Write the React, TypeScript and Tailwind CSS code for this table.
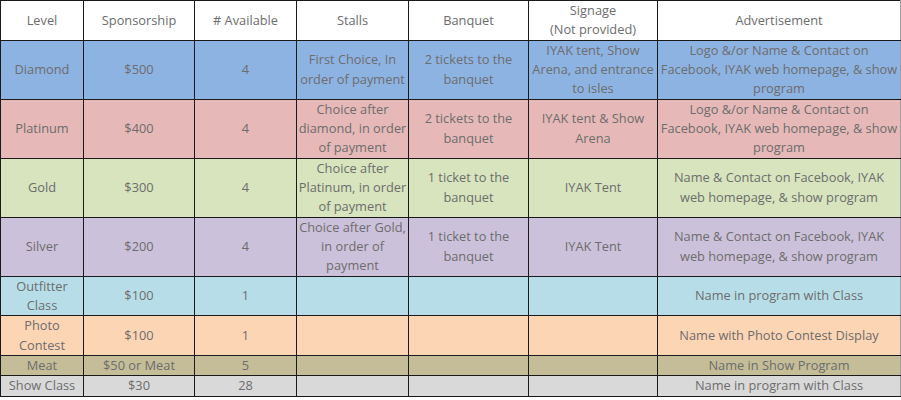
import * as React from "react"

interface Row {
  level: string;
  sponsorship: string;
  available: string;
  stalls: string;
  banquet: string;
  signage: string;
  advertisement: string[];
  bg: string;
}

const rows: Row[] = [
  {
    level: "Diamond",
    sponsorship: "$500",
    available: "4",
    stalls: "First Choice, In order of payment",
    banquet: "2 tickets to the banquet",
    signage: "IYAK tent, Show Arena, and entrance to isles",
    advertisement: ["Logo &/or Name & Contact on Facebook, IYAK web homepage, & show program"],
    bg: "bg-[#8db3e2]",
  },
  {
    level: "Platinum",
    sponsorship: "$400",
    available: "4",
    stalls: "Choice after diamond, in order of payment",
    banquet: "2 tickets to the banquet",
    signage: "IYAK tent & Show Arena",
    advertisement: ["Logo &/or Name & Contact on Facebook, IYAK web homepage, & show program"],
    bg: "bg-[#e6b9b8]",
  },
  {
    level: "Gold",
    sponsorship: "$300",
    available: "4",
    stalls: "Choice after Platinum, in order of payment",
    banquet: "1 ticket to the banquet",
    signage: "IYAK Tent",
    advertisement: ["Name & Contact on Facebook, IYAK", "web homepage, & show program"],
    bg: "bg-[#d7e4bd]",
  },
  {
    level: "Silver",
    sponsorship: "$200",
    available: "4",
    stalls: "Choice after Gold, in order of payment",
    banquet: "1 ticket to the banquet",
    signage: "IYAK Tent",
    advertisement: ["Name & Contact on Facebook, IYAK", "web homepage, & show program"],
    bg: "bg-[#ccc1da]",
  },
  {
    level: "Outfitter Class",
    sponsorship: "$100",
    available: "1",
    stalls: "",
    banquet: "",
    signage: "",
    advertisement: ["Name in program with Class"],
    bg: "bg-[#b7dee8]",
  },
  {
    level: "Photo Contest",
    sponsorship: "$100",
    available: "1",
    stalls: "",
    banquet: "",
    signage: "",
    advertisement: ["Name with Photo Contest Display"],
    bg: "bg-[#fcd5b5]",
  },
  {
    level: "Meat",
    sponsorship: "$50 or Meat",
    available: "5",
    stalls: "",
    banquet: "",
    signage: "",
    advertisement: ["Name in Show Program"],
    bg: "bg-[#c4bd97]",
  },
  {
    level: "Show Class",
    sponsorship: "$30",
    available: "28",
    stalls: "",
    banquet: "",
    signage: "",
    advertisement: ["Name in program with Class"],
    bg: "bg-[#d9d9d9]",
  },
]

const cell = "border border-[#1a1a1a] p-0 text-center align-middle"

export default function App() {
  return (
    <div className="w-[901px] h-[400px] overflow-hidden bg-white">
      <table
        className="w-[900px] table-fixed border-collapse text-[12.8px] leading-[19.33px] text-[#6d6d6d]"
        style={{ fontFamily: '"Open Sans", "Noto Sans", sans-serif' }}
      >
        <colgroup>
          <col className="w-[83px]" />
          <col className="w-[111px]" />
          <col className="w-[102px]" />
          <col className="w-[112px]" />
          <col className="w-[120px]" />
          <col className="w-[129px]" />
          <col className="w-[243px]" />
        </colgroup>
        <thead>
          <tr className="bg-white">
            <th className={`${cell} font-normal`}>Level</th>
            <th className={`${cell} font-normal`}>Sponsorship</th>
            <th className={`${cell} font-normal`}># Available</th>
            <th className={`${cell} font-normal`}>Stalls</th>
            <th className={`${cell} font-normal`}>Banquet</th>
            <th className={`${cell} font-normal`}>
              Signage
              <br />
              (Not provided)
            </th>
            <th className={`${cell} font-normal border-r-[#a0a0a0]`}>Advertisement</th>
          </tr>
        </thead>
        <tbody>
          {rows.map((r) => (
            <tr key={r.level} className={r.bg}>
              <td className={cell}>{r.level}</td>
              <td className={cell}>{r.sponsorship}</td>
              <td className={cell}>{r.available}</td>
              <td className={cell}>{r.stalls}</td>
              <td className={cell}>{r.banquet}</td>
              <td className={cell}>{r.signage}</td>
              <td className={`${cell} border-r-[#a0a0a0]`}>
                {r.advertisement.map((line, i) => (
                  <React.Fragment key={i}>
                    {i > 0 && <br />}
                    {line}
                  </React.Fragment>
                ))}
              </td>
            </tr>
          ))}
        </tbody>
      </table>
    </div>
  )
}
